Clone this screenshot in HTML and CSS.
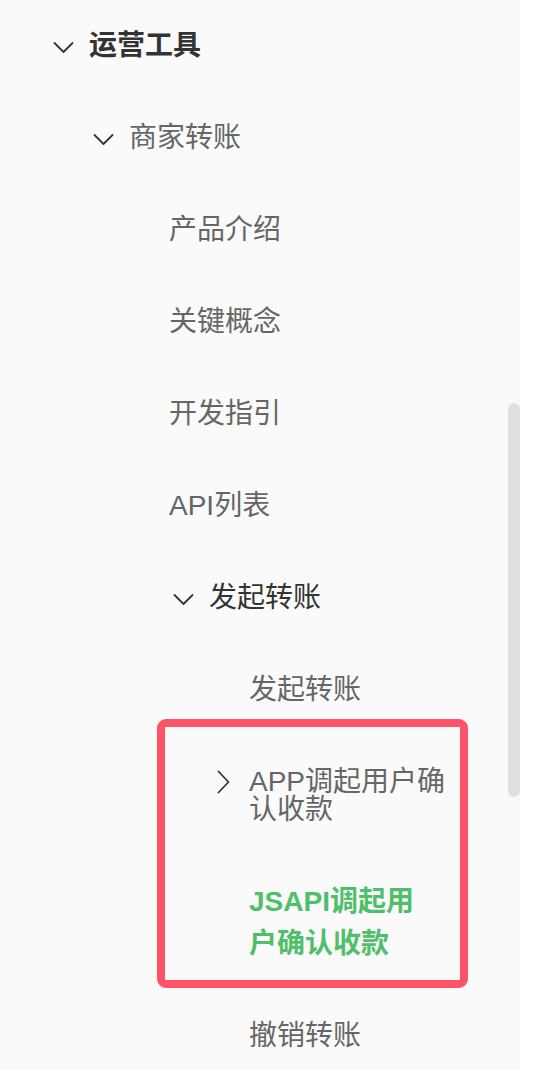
FILE: index.html
```html
<!DOCTYPE html>
<html lang="zh-CN">
<head>
<meta charset="utf-8">
<title>运营工具</title>
<link rel="stylesheet" href="styles.css">
</head>
<body>
<div class="page">
  <aside class="sidebar">
    <ul class="nav">
      <li class="item lv0 strong">
        <span class="ico"><svg viewBox="0 0 21 28" width="21" height="28"><path d="M1.5 11 L10.5 20 L19.5 11" /></svg></span>
        <span class="label">运营工具</span>
      </li>
      <li class="item lv1">
        <span class="ico"><svg viewBox="0 0 21 28" width="21" height="28"><path d="M1.5 11 L10.5 20 L19.5 11" /></svg></span>
        <span class="label">商家转账</span>
      </li>
      <li class="item lv2">
        <span class="ico"></span>
        <span class="label">产品介绍</span>
      </li>
      <li class="item lv2">
        <span class="ico"></span>
        <span class="label">关键概念</span>
      </li>
      <li class="item lv2">
        <span class="ico"></span>
        <span class="label">开发指引</span>
      </li>
      <li class="item lv2">
        <span class="ico"></span>
        <span class="label">API列表</span>
      </li>
      <li class="item lv3 dark">
        <span class="ico"><svg viewBox="0 0 21 28" width="21" height="28"><path d="M1.5 11 L10.5 20 L19.5 11" /></svg></span>
        <span class="label">发起转账</span>
      </li>
      <li class="item lv4">
        <span class="ico"></span>
        <span class="label">发起转账</span>
      </li>
      <li class="item lv4">
        <span class="ico"><svg viewBox="0 0 21 28" width="21" height="28"><path d="M5.5 3.5 L15.5 14 L5.5 24.5" /></svg></span>
        <span class="label">APP调起用户确<br>认收款</span>
      </li>
      <li class="item lv4 active">
        <span class="ico"></span>
        <span class="label">JSAPI调起用<br>户确认收款</span>
      </li>
      <li class="item lv4">
        <span class="ico"></span>
        <span class="label">撤销转账</span>
      </li>
    </ul>
    <div class="highlight"></div>
    <div class="thumb"></div>
  </aside>
  <div class="rest"></div>
</div>
</body>
</html>
```

FILE: styles.css
```css
* { box-sizing: border-box; }
html, body {
  margin: 0;
  padding: 0;
  width: 550px;
  height: 1070px;
  overflow: hidden;
  background: #ffffff;
}
body {
  font-family: "Liberation Sans", "Noto Sans CJK SC", sans-serif;
  font-size: 28px;
  color: #666666;
}
.page {
  display: flex;
  height: 1070px;
}
.sidebar {
  position: relative;
  width: 520px;
  height: 1070px;
  background: #fafafa;
  overflow: hidden;
}
.rest {
  flex: 1;
  background: #ffffff;
}
.nav {
  list-style: none;
  margin: 0;
  padding: 0;
}
.item {
  display: flex;
  align-items: flex-start;
  gap: 15px;
  padding-top: 32px;
  padding-bottom: 32px;
  line-height: 28px;
  white-space: nowrap;
}
.lv0 { padding-left: 53px; }
.lv1 { padding-left: 93px; }
.lv2 { padding-left: 133px; }
.lv3 { padding-left: 173px; }
.lv4 { padding-left: 213px; }
.ico {
  flex: none;
  width: 21px;
  height: 28px;
  display: flex;
}
.ico svg {
  fill: none;
  stroke: #333333;
  stroke-width: 1.8;
  stroke-linecap: round;
  stroke-linejoin: round;
}
.strong .label {
  color: #333333;
  font-weight: 700;
}
.dark .label {
  color: #333333;
}
.active {
  padding-top: 25px;
  padding-bottom: 25px;
  line-height: 42px;
}
.active .ico { height: 42px; }
.active .label {
  color: #4fbf6a;
  font-weight: 700;
}
.highlight {
  position: absolute;
  left: 157px;
  top: 719px;
  width: 311px;
  height: 269px;
  border: 8px solid #ff5468;
  border-radius: 9px;
}
.thumb {
  position: absolute;
  left: 508px;
  top: 403px;
  width: 12px;
  height: 394px;
  border-radius: 6px;
  background: #e0e0e0;
}
```
